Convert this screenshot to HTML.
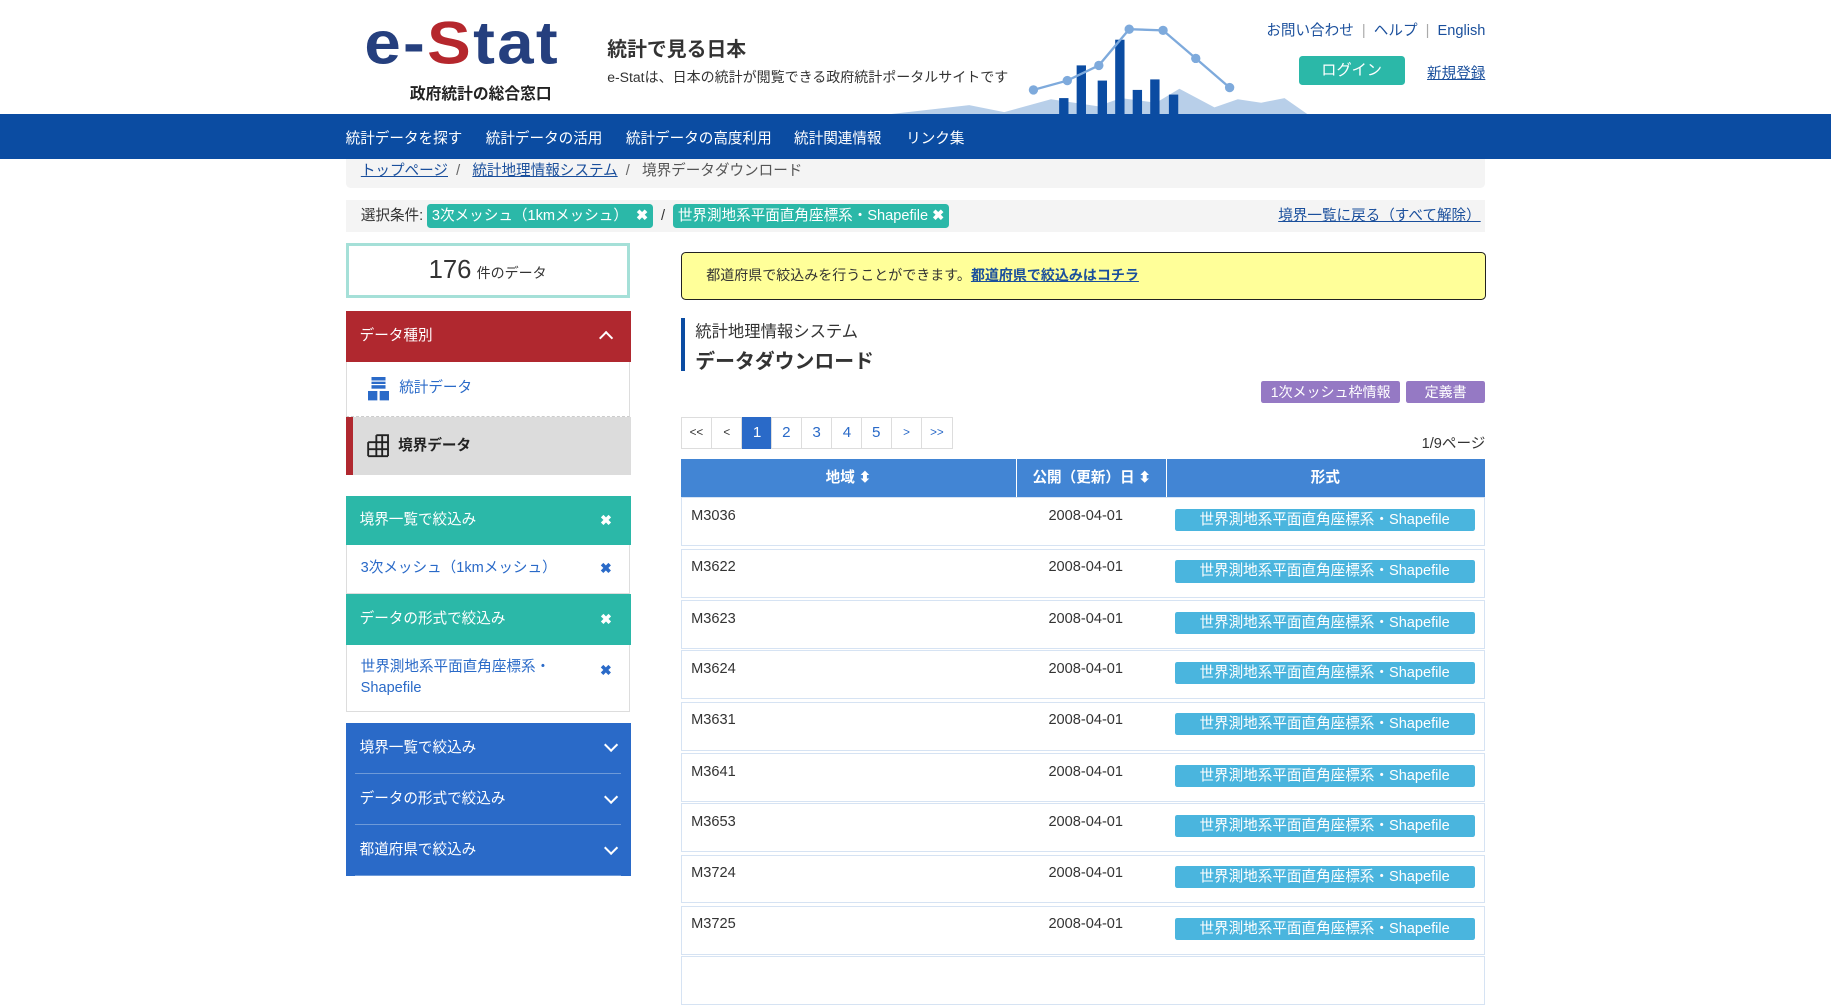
<!DOCTYPE html>
<html><head><meta charset="utf-8"><style>
html{zoom:1.16773}
body{margin:0;width:1568px;height:825px;overflow:hidden;background:#fff;font-family:"Liberation Sans","Noto Sans CJK JP",sans-serif;color:#333;position:relative}
.a{position:absolute}
a{color:#1a4f9c;text-decoration:underline}
.nav span{position:absolute;top:11px;color:#fff;font-size:12.5px}
.tag{display:inline-block;background:#2bb8a8;color:#fff;border-radius:3px;padding:1px 4px;font-size:12.5px;height:19px;line-height:19px}
.teal{background:#2bb8a8;color:#fff;font-size:12.5px}
.x{position:absolute;right:16px;font-weight:bold;font-size:12px}
.blue div{height:43px;line-height:43px;margin:0 8px 0 8px;border-bottom:1px solid #6e9ad8;color:#fff;font-size:12.5px;position:relative;padding-left:4px}
.chev{position:absolute;right:4px;top:15px;width:7px;height:7px;border-right:2.5px solid #fff;border-bottom:2.5px solid #fff;transform:rotate(45deg)}
.pg{position:absolute;top:357px;height:26px;line-height:26px;width:25px;text-align:center;border:1px solid #ddd;margin-left:-1px;font-size:13px;color:#2a6ac8;background:#fff}
.row{position:absolute;left:583px;width:687px;height:40px;border:1px solid #d6e3f3;font-size:12.5px}
.row .c1{position:absolute;left:8px;top:8px}
.row .c2{position:absolute;left:314px;top:8px}
.row .b{position:absolute;left:422px;top:9px;width:257px;height:19px;line-height:19px;background:#4ab5de;color:#fff;text-align:center;border-radius:2px;font-size:12.5px}
</style></head><body>
<!-- header -->
<div class="a" style="left:312px;top:8px;font-size:56px;font-weight:bold;letter-spacing:2px;color:#253f7e;line-height:64px;transform:scaleY(0.92);transform-origin:top left">e-<span style="color:#b5272d">S</span>tat</div>
<div class="a" style="left:351px;top:69px;font-size:13.5px;font-weight:bold;color:#222">政府統計の総合窓口</div>
<div class="a" style="left:520px;top:28px;font-size:17px;font-weight:bold;color:#333">統計で見る日本</div>
<div class="a" style="left:520px;top:57px;font-size:12px;color:#333">e-Statは、日本の統計が閲覧できる政府統計ポータルサイトです</div>
<svg class="a" style="left:0;top:0" width="1568" height="98">
<polygon points="760,98 830,90 860,96 900,85 940,91 960,84 990,88 1010,76 1040,92 1060,85 1080,88 1100,84 1120,98" fill="#b8cfe9"/>
<g fill="#0b4ca2"><rect x="907" y="84" width="8" height="14"/><rect x="922" y="56" width="8" height="42"/><rect x="940" y="69" width="8" height="29"/><rect x="955" y="34" width="8" height="64"/><rect x="970" y="77" width="8" height="21"/><rect x="985" y="68" width="8" height="30"/><rect x="1001" y="81" width="8" height="17"/></g>
<polyline points="885,77 914,69 941,56 967,25 996,26 1024,50 1053,75" fill="none" stroke="#7eaadc" stroke-width="2"/>
<g fill="#7eaadc"><circle cx="885" cy="77" r="4"/><circle cx="914" cy="69" r="4"/><circle cx="941" cy="56" r="4"/><circle cx="967" cy="25" r="4"/><circle cx="996" cy="26" r="4"/><circle cx="1024" cy="50" r="4"/><circle cx="1053" cy="75" r="4"/></g>
</svg>
<div class="a" style="right:296px;top:16px;font-size:12.5px;color:#1a4f9c">お問い合わせ <span style="color:#aaa">&nbsp;|&nbsp;</span> ヘルプ <span style="color:#aaa">&nbsp;|&nbsp;</span> English</div>
<div class="a" style="left:1112px;top:48px;width:91px;height:25px;line-height:25px;background:#2bb8a8;color:#fff;text-align:center;border-radius:3px;font-size:13px">ログイン</div>
<div class="a" style="right:296px;top:53px;font-size:12.5px"><a>新規登録</a></div>
<div class="a nav" style="left:0;top:98px;width:1568px;height:38px;background:#0b4ca2">
<span style="left:296px">統計データを探す</span><span style="left:416px">統計データの活用</span><span style="left:536px">統計データの高度利用</span><span style="left:680px">統計関連情報</span><span style="left:776px">リンク集</span></div>
<!-- breadcrumb -->
<div class="a" style="left:296px;top:136px;width:976px;height:25px;background:#f4f4f4;border-radius:0 0 4px 4px;font-size:12.5px;line-height:22px"><span style="margin-left:13px"><a>トップページ</a></span> <span style="color:#666">&nbsp;/&nbsp;&nbsp;</span> <a>統計地理情報システム</a> <span style="color:#666">&nbsp;/&nbsp;&nbsp;</span> <span style="color:#555">境界データダウンロード</span></div>
<div class="a" style="left:296px;top:171px;width:976px;height:28px;background:#f4f4f4;font-size:12.5px;line-height:28px"><span style="margin-left:13px">選択条件:</span> <span class="tag">3次メッシュ（1kmメッシュ） &nbsp;<b>✖</b></span> &nbsp;/&nbsp; <span class="tag">世界測地系平面直角座標系・Shapefile <b>✖</b></span>
<a style="position:absolute;right:4px;top:0">境界一覧に戻る（すべて解除）</a></div>
<!-- left -->
<div class="a" style="left:296px;top:208px;width:238px;height:42px;border:3px solid #a5e0d8;text-align:center;line-height:42px"><span style="font-size:22px">176</span> <span style="font-size:12px">件のデータ</span></div>
<div class="a" style="left:296px;top:266px;width:244px;height:44px;background:#b0282f;color:#fff;font-size:12.5px;line-height:44px"><span style="margin-left:12px">データ種別</span><span style="position:absolute;right:17px;top:19px;width:7px;height:7px;border-left:2.5px solid #fff;border-top:2.5px solid #fff;transform:rotate(45deg)"></span></div>
<div class="a" style="left:296px;top:310px;width:242px;height:46px;border:1px solid #ddd;border-top:0;border-bottom:1px dashed #ccc;font-size:12.5px;line-height:46px;color:#2a6ac8">
<svg style="position:absolute;left:18px;top:13px" width="18" height="20"><rect x="3" y="0" width="12" height="10" fill="#2a6ac8"/><g stroke="#fff"><line x1="3" y1="3.5" x2="15" y2="3.5"/><line x1="3" y1="6.5" x2="15" y2="6.5"/></g><path d="M0 12h8v8H0zM10 12h8v8h-8z" fill="#2a6ac8"/></svg><span style="margin-left:45px">統計データ</span></div>
<div class="a" style="left:296px;top:357px;width:238px;height:50px;background:#dcdcdc;border-left:6px solid #b0282f;font-size:12.5px;line-height:50px;font-weight:bold;color:#222">
<svg style="position:absolute;left:12px;top:15px" width="20" height="20" fill="none" stroke="#222" stroke-width="1.6"><path d="M8 1h10v12M8 1v18M13 1v18M1 7h17M1 13h17M1 19h17M1 7v12M18 13v6"/></svg><span style="margin-left:39px">境界データ</span></div>
<div class="a teal" style="left:296px;top:425px;width:244px;height:42px;line-height:42px"><span style="margin-left:12px">境界一覧で絞込み</span><span class="x">✖</span></div>
<div class="a" style="left:296px;top:467px;width:242px;height:41px;line-height:41px;border:1px solid #ddd;border-top:0;font-size:12.5px;color:#2a6ac8;background:#fff"><span style="margin-left:12px">3次メッシュ（1kmメッシュ）</span><span class="x" style="right:15px">✖</span></div>
<div class="a teal" style="left:296px;top:509px;width:244px;height:43px;line-height:43px"><span style="margin-left:12px">データの形式で絞込み</span><span class="x">✖</span></div>
<div class="a" style="left:296px;top:552px;width:242px;height:57px;border:1px solid #ddd;border-top:0;font-size:12.5px;color:#2a6ac8;line-height:18px"><div style="margin:11px 0 0 12px">世界測地系平面直角座標系・<br>Shapefile</div><span class="x" style="right:15px;top:13px">✖</span></div>
<div class="a blue" style="left:296px;top:619px;width:244px;height:131px;background:#2a6ac8">
<div>境界一覧で絞込み<span class="chev"></span></div><div>データの形式で絞込み<span class="chev"></span></div><div>都道府県で絞込み<span class="chev"></span></div></div>
<!-- right -->
<div class="a" style="left:583px;top:216px;width:688px;height:39px;background:#ffff99;border:1px solid #222;border-radius:4px;font-size:12px;line-height:39px"><span style="margin-left:21px">都道府県で絞込みを行うことができます。<a style="font-weight:bold">都道府県で絞込みはコチラ</a></span></div>
<div class="a" style="left:583px;top:272px;height:46px;border-left:4px solid #0b4ca2;padding-left:9px"><div style="font-size:14px;margin-top:0">統計地理情報システム</div><div style="font-size:17px;font-weight:bold;margin-top:3px">データダウンロード</div></div>
<div class="a" style="left:1080px;top:326px;width:119px;height:19px;line-height:19px;background:#9579c4;color:#fff;font-size:12px;text-align:center;border-radius:2px">1次メッシュ枠情報</div>
<div class="a" style="left:1204px;top:326px;width:68px;height:19px;line-height:19px;background:#9579c4;color:#fff;font-size:12px;text-align:center;border-radius:2px">定義書</div>
<div class="pg" style="left:584px;font-size:10px;color:#333">&lt;&lt;</div><div class="pg" style="left:610px;font-size:10px;color:#333">&lt;</div><div class="pg" style="left:636px;background:#2a6ac8;color:#fff;border-color:#2a6ac8">1</div><div class="pg" style="left:661px">2</div><div class="pg" style="left:687px">3</div><div class="pg" style="left:713px">4</div><div class="pg" style="left:738px">5</div><div class="pg" style="left:764px;font-size:10px">&gt;</div><div class="pg" style="left:790px;font-size:10px">&gt;&gt;</div>
<div class="a" style="right:296px;top:370px;font-size:12.5px">1/9ページ</div>
<div class="a" style="left:583px;top:393px;width:689px;height:33px;background:#4285d4;color:#fff;font-size:12.5px;font-weight:bold;line-height:33px">
<span style="position:absolute;left:0;width:287px;text-align:center">地域 ⬍</span><span style="position:absolute;left:287px;width:128px;text-align:center;border-left:1px solid #fff;border-right:1px solid #fff">公開（更新）日 ⬍</span><span style="position:absolute;left:415px;width:274px;text-align:center">形式</span></div>
<div class="row" style="top:426px"><span class="c1">M3036</span><span class="c2">2008-04-01</span><span class="b">世界測地系平面直角座標系・Shapefile</span></div>
<div class="row" style="top:470px"><span class="c1">M3622</span><span class="c2">2008-04-01</span><span class="b">世界測地系平面直角座標系・Shapefile</span></div>
<div class="row" style="top:514px"><span class="c1">M3623</span><span class="c2">2008-04-01</span><span class="b">世界測地系平面直角座標系・Shapefile</span></div>
<div class="row" style="top:557px"><span class="c1">M3624</span><span class="c2">2008-04-01</span><span class="b">世界測地系平面直角座標系・Shapefile</span></div>
<div class="row" style="top:601px"><span class="c1">M3631</span><span class="c2">2008-04-01</span><span class="b">世界測地系平面直角座標系・Shapefile</span></div>
<div class="row" style="top:645px"><span class="c1">M3641</span><span class="c2">2008-04-01</span><span class="b">世界測地系平面直角座標系・Shapefile</span></div>
<div class="row" style="top:688px"><span class="c1">M3653</span><span class="c2">2008-04-01</span><span class="b">世界測地系平面直角座標系・Shapefile</span></div>
<div class="row" style="top:732px"><span class="c1">M3724</span><span class="c2">2008-04-01</span><span class="b">世界測地系平面直角座標系・Shapefile</span></div>
<div class="row" style="top:776px"><span class="c1">M3725</span><span class="c2">2008-04-01</span><span class="b">世界測地系平面直角座標系・Shapefile</span></div>
<div class="row" style="top:819px"></div>
</body></html>
